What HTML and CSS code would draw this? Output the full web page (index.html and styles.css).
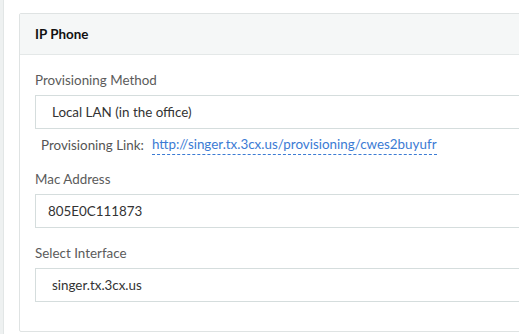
FILE: index.html
```html
<!DOCTYPE html>
<html lang="en">
<head>
    <meta charset="UTF-8">
    <title>IP Phone</title>
    <link rel="stylesheet" href="styles.css">
</head>
<body>

<div class="page">
    <div class="sidebar"></div>

    <div class="content">
        <div class="panel">
            <div class="panel-heading">IP Phone</div>

            <div class="panel-body">
                <div class="form-group first">
                    <label class="control-label">Provisioning Method</label>
                    <div class="form-control select">Local LAN (in the office)</div>
                    <div class="prov-link">
                        <span>Provisioning Link:</span>
                        <a href="#">http://singer.tx.3cx.us/provisioning/cwes2buyufr</a>
                    </div>
                </div>

                <div class="form-group">
                    <label class="control-label">Mac Address</label>
                    <div class="form-control">805E0C111873</div>
                </div>

                <div class="form-group">
                    <label class="control-label">Select Interface</label>
                    <div class="form-control select">singer.tx.3cx.us</div>
                </div>
            </div>
        </div>
    </div>
</div>

</body>
</html>
```

FILE: styles.css
```css
body {
    margin: 0;
    font-family: 'Lato', 'Open Sans', sans-serif;
    font-size: 13.4px;
    color: #555;
    background-color: #fff;
    overflow: hidden;
}
.page {
    display: flex;
    height: 334px;
    overflow: hidden;
}
.sidebar {
    width: 3px;
    flex-shrink: 0;
    background-color: #eef1f1;
    border-right: 1px solid #e2e6e6;
}
.content {
    flex: 1;
    padding: 13px 0 0 15px;
}
.panel {
    width: 540px;
    border: 1px solid #dfe3e3;
    border-radius: 2px;
}
.panel-heading {
    height: 40px;
    line-height: 40px;
    padding-left: 15px;
    background-color: #f5f7f7;
    border-bottom: 1px solid #e4e8e8;
    font-weight: 700;
    color: #111;
}
.panel-body {
    padding: 15px 15px 14px 15px;
}
.form-group {
    display: flex;
    flex-direction: column;
    margin-bottom: 15px;
}
.form-group.first {
    margin-bottom: 14px;
}
.control-label {
    line-height: 20px;
    margin-bottom: 5px;
    color: #5b5b5b;
}
.form-control {
    height: 32px;
    line-height: 32px;
    border: 1px solid #d5dddd;
    padding-left: 12px;
    color: #333;
}
.select {
    padding-left: 16px;
}
.prov-link {
    display: flex;
    gap: 8px;
    margin-top: 6px;
    padding-left: 6px;
    line-height: 20px;
}
.prov-link a {
    color: #3b7bd4;
    text-decoration: none;
    border-bottom: 1px dashed #3b7bd4;
    line-height: 18px;
}
```
